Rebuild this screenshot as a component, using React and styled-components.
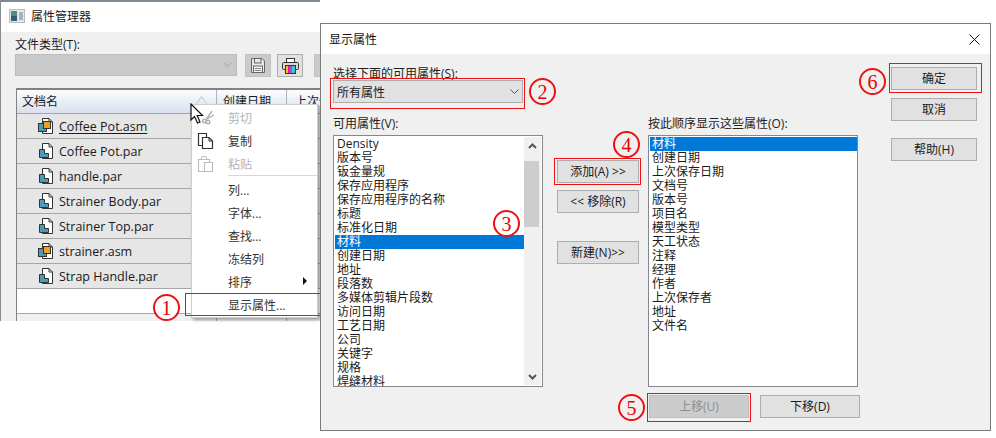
import React from 'react';
import styled, { createGlobalStyle } from 'styled-components';

const font = '"Open Sans", "Noto Sans CJK SC", sans-serif';

const GlobalStyle = createGlobalStyle`
html, body {
  margin: 0;
  padding: 0;
  background: #ffffff;
}
* {
  box-sizing: border-box;
}
`;

const Page = styled.div`
position: relative;
width: 996px;
height: 438px;
overflow: hidden;
background: #ffffff;
font-family: ${font};
font-size: 12px;
color: #1a1a1a;
`;

/* back window */
const BackWindow = styled.div`
position: absolute;
left: 0;
top: 0;
width: 320px;
height: 321px;
display: flex;
flex-direction: column;
border-top: 2px solid #7d8a94;
border-left: 1px solid #8c8c8c;
background: #f0f0f0;
overflow: hidden;
`;

const BackTitle = styled.div`
height: 30px;
flex-shrink: 0;
display: flex;
align-items: center;
gap: 6px;
padding: 0 0 2px 8px;
background: #ffffff;
font-size: 12px;
`;

const BackBody = styled.div`
flex: 1;
display: flex;
flex-direction: column;
padding: 5px 0 0 14px;
min-height: 0;
`;

const BackLabel = styled.div`
height: 16px;
line-height: 16px;
`;

const ToolRow = styled.div`
display: flex;
align-items: center;
height: 24px;
`;

const TypeSelect = styled.div`
width: 222px;
height: 22px;
flex-shrink: 0;
display: flex;
align-items: center;
justify-content: flex-end;
padding-right: 4px;
background: #c9c9c9;
border: 1px solid #bcbcbc;
`;

const ToolButton = styled.div`
width: 26px;
height: 23px;
flex-shrink: 0;
margin-left: ${p => p.$gap}px;
display: flex;
align-items: center;
justify-content: center;
background: ${p => (p.$disabled ? '#cacaca' : '#e1e1e1')};
border: 1px solid ${p => (p.$disabled ? '#c2c2c2' : '#adadad')};
`;

const DocList = styled.div`
margin: 11px 0 0 1px;
flex: 1;
width: 320px;
flex-shrink: 0;
border-left: 1px solid #828282;
border-top: 2px solid #828282;
overflow: hidden;
`;

const DocHeader = styled.div`
height: 24px;
display: grid;
grid-template-columns: 200px 70px 60px;
background: linear-gradient(#fbfcfe, #d9e1ee);
border-bottom: 1px solid #a6a6a6;
`;

const HeaderCell = styled.div`
position: relative;
display: flex;
align-items: center;
padding-left: ${p => p.$pad}px;
padding-bottom: 2px;
border-right: 1px solid #a9b4c4;
white-space: nowrap;
overflow: hidden;
`;

const SortMark = styled.svg`
position: absolute;
right: 9px;
top: 6px;
`;

const DocRow = styled.div`
height: 25px;
display: flex;
align-items: center;
gap: 5px;
padding-left: 20px;
background: ${p => (p.$empty ? '#ffffff' : '#e6e6e6')};
border-bottom: 1px solid #a6a6a6;
font-size: 12.5px;
`;

const DocName = styled.span`
text-decoration: ${p => (p.$link ? 'underline' : 'none')};
text-underline-offset: 2px;
`;

const DocFoot = styled.div`
height: 8px;
display: grid;
grid-template-columns: 200px 70px 60px;
`;

const FootCell = styled.div`
border-right: 1px solid #a6a6a6;
`;

/* context menu */
const Menu = styled.div`
position: absolute;
left: 191px;
top: 104px;
width: 127px;
height: 214px;
padding-top: 1px;
display: flex;
flex-direction: column;
background: #ffffff;
border: 1px solid #cfcfcf;
box-shadow: 2px 2px 3px rgba(0, 0, 0, 0.35);
`;

const MenuItem = styled.div`
position: relative;
height: 23px;
flex-shrink: 0;
display: flex;
align-items: center;
padding-left: 36px;
color: ${p => (p.$disabled ? '#b4b4b4' : '#333333')};
`;

const MenuIcon = styled.span`
position: absolute;
left: 5px;
top: 3px;
width: 18px;
height: 18px;
display: flex;
`;

const MenuSeparator = styled.div`
height: 1px;
flex-shrink: 0;
margin: 0 0 2px 36px;
background: #d7d7d7;
`;

const SubArrow = styled.span`
position: absolute;
right: 10px;
top: 7px;
border-left: 4px solid #111111;
border-top: 4px solid transparent;
border-bottom: 4px solid transparent;
`;

const Pointer = styled.svg`
position: absolute;
left: 190px;
top: 103px;
`;

/* dialog */
const Dialog = styled.div`
position: absolute;
left: 320px;
top: 23px;
width: 671px;
height: 408px;
display: flex;
flex-direction: column;
background: #f0f0f0;
border: 1px solid #7a7a7a;
`;

const DialogTitle = styled.div`
height: 30px;
flex-shrink: 0;
display: flex;
align-items: center;
justify-content: space-between;
padding: 0 10px 0 8px;
background: #ffffff;
color: #111111;
`;

const DialogBody = styled.div`
flex: 1;
display: grid;
grid-template-columns: 210px 82px 212px 86px;
column-gap: 14px;
padding-left: 12px;
`;

const Column = styled.div`
display: flex;
flex-direction: column;
align-items: flex-start;
padding-top: ${p => p.$top || 0}px;
margin-left: ${p => p.$left || 0}px;
`;

const FieldLabel = styled.div`
height: 14px;
line-height: 16px;
margin-top: ${p => p.$top}px;
white-space: nowrap;
color: #222222;
`;

const Select = styled.div`
width: 190px;
height: 23px;
display: flex;
align-items: center;
justify-content: space-between;
padding: 0 3px 0 3px;
background: #e1e1e1;
border: 1px solid #adadad;
`;

const ListBox = styled.div`
width: 210px;
height: 252px;
margin-top: ${p => p.$top}px;
display: flex;
background: #ffffff;
border: 1px solid #828790;
overflow: hidden;
`;

const Options = styled.div`
flex: 1;
padding: 1px 0 0 1px;
overflow: hidden;
min-width: 0;
`;

const Option = styled.div`
height: 14px;
line-height: 14px;
padding-left: 2px;
white-space: nowrap;
background: ${p => (p.$selected ? '#0078d7' : 'transparent')};
color: ${p => (p.$selected ? '#ffffff' : '#1a1a1a')};
`;

const ScrollBar = styled.div`
width: 17px;
flex-shrink: 0;
margin: 1px 1px 1px 0;
display: flex;
flex-direction: column;
align-items: center;
background: #f0f0f0;
`;

const ScrollArrow = styled.div`
height: 17px;
flex-shrink: 0;
display: flex;
align-items: center;
justify-content: center;
`;

const ScrollTrack = styled.div`
flex: 1;
width: 100%;
padding-top: 7px;
`;

const ScrollThumb = styled.div`
width: 15px;
height: 66px;
background: #cdcdcd;
`;

const Button = styled.div`
width: ${p => p.$width}px;
height: 23px;
flex-shrink: 0;
margin-top: ${p => p.$top || 0}px;
margin-left: ${p => p.$left || 0}px;
padding-bottom: 2px;
display: flex;
align-items: center;
justify-content: center;
background: ${p => (p.$disabled ? '#cccccc' : '#e1e1e1')};
border: 1px solid ${p => (p.$disabled ? '#bfbfbf' : '#adadad')};
color: ${p => (p.$disabled ? '#8f8f8f' : '#1a1a1a')};
white-space: nowrap;
`;

const MoveRow = styled.div`
display: flex;
`;

/* annotations */
const RedBox = styled.div`
position: absolute;
left: ${p => p.$x}px;
top: ${p => p.$y}px;
width: ${p => p.$w}px;
height: ${p => p.$h}px;
border: 1px solid #ee1111;
pointer-events: none;
`;

const Callout = styled.div`
position: absolute;
left: ${p => p.$x - 13}px;
top: ${p => p.$y - 13}px;
width: 27px;
height: 27px;
display: flex;
align-items: center;
justify-content: center;
border: 2px solid #ee1111;
border-radius: 50%;
background: ${p => (p.$fill ? '#ffffff' : 'transparent')};
color: #ee0000;
font-family: "Liberation Serif", serif;
font-size: 20px;
line-height: 1;
`;

const AppIcon = () => (
  <svg width="16" height="14" viewBox="0 0 16 14">
    <rect x="0.5" y="0.5" width="15" height="13" fill="#e4e7e6" stroke="#b9bcbc" />
    <rect x="2" y="2" width="6" height="10" fill="#4d8a86" />
    <rect x="2" y="7" width="6" height="5" fill="#2f5f7a" />
    <rect x="10" y="3" width="4" height="8" fill="#aab4b4" />
  </svg>
);

const Chevron = ({ color = '#555555' }) => (
  <svg width="9" height="6" viewBox="0 0 9 6">
    <path d="M0.5 0.5 L4.5 4.5 L8.5 0.5" fill="none" stroke={color} strokeWidth="1" />
  </svg>
);

const ScrollChevron = ({ up }) => (
  <svg width="9" height="6" viewBox="0 0 9 6">
    <path d={up ? 'M1 5 L4.5 1.5 L8 5' : 'M1 1 L4.5 4.5 L8 1'} fill="none" stroke="#555555" strokeWidth="2" />
  </svg>
);

const SaveIcon = () => (
  <svg width="16" height="17" viewBox="0 0 16 17">
    <path d="M1.5 1.5 H12 L14.5 4 V15.5 H1.5 Z" fill="#e8e8e8" stroke="#666666" />
    <rect x="4.5" y="1.5" width="6.5" height="4.5" fill="none" stroke="#666666" />
    <rect x="3.5" y="9" width="9" height="6.5" fill="#f5f5f5" stroke="#666666" />
    <path d="M5 11.5 H11 M5 13.5 H11" stroke="#888888" />
  </svg>
);

const PrintIcon = () => (
  <svg width="17" height="17" viewBox="0 0 17 17">
    <rect x="4.5" y="1.5" width="8" height="4" fill="#ffffff" stroke="#333333" />
    <rect x="0.5" y="5.5" width="16" height="7" rx="1" fill="#d8d8d8" stroke="#333333" />
    <rect x="4" y="9" width="2" height="7" fill="#f0c020" />
    <rect x="6" y="9" width="2" height="7" fill="#e02090" />
    <rect x="8" y="9" width="2" height="7" fill="#b050d0" />
    <rect x="10" y="9" width="3" height="7" fill="#40c0d0" />
    <rect x="3.5" y="8.5" width="10" height="8" fill="none" stroke="#333333" />
  </svg>
);

const FileIcon = ({ assembly }) => (
  <svg width="17" height="18" viewBox="0 0 17 18">
    <path d="M5.5 1.5 H12 L15.5 5 V16.5 H5.5 Z" fill="#ffffff" stroke="#333333" />
    <path d="M12 1.5 V5 H15.5" fill="none" stroke="#333333" />
    {assembly ? (
      <>
        <rect x="1.5" y="6.5" width="8" height="8" fill="#4f9bb5" stroke="#333333" />
        <rect x="6.5" y="4.5" width="7" height="7" fill="#f0a020" stroke="#333333" />
      </>
    ) : (
      <path d="M2.5 7.5 H7.5 V11.5 H11.5 V15.5 H2.5 Z" fill="#4f9bb5" stroke="#333333" />
    )}
  </svg>
);

const ScissorsIcon = () => (
  <svg width="18" height="16" viewBox="0 0 18 16">
    <path d="M15 2 L9.5 10 M17 6 L8 11" fill="none" stroke="#b0b0b0" strokeWidth="1.4" />
    <circle cx="7.5" cy="12" r="1.8" fill="none" stroke="#b0b0b0" strokeWidth="1.4" />
    <circle cx="11" cy="13" r="1.8" fill="none" stroke="#b0b0b0" strokeWidth="1.4" />
  </svg>
);

const CopyIcon = () => (
  <svg width="17" height="18" viewBox="0 0 17 18">
    <path d="M1.5 1.5 H9.5 V13.5 H1.5 Z" fill="#ffffff" stroke="#333333" strokeWidth="1.2" />
    <path d="M5.5 5.5 H12 L15.5 9 V16.5 H5.5 Z" fill="#ffffff" stroke="#333333" strokeWidth="1.2" />
    <path d="M12 5.5 V9 H15.5" fill="none" stroke="#333333" />
  </svg>
);

const PasteIcon = () => (
  <svg width="17" height="18" viewBox="0 0 17 18">
    <path d="M1.5 4.5 H12.5 V16.5 H1.5 Z" fill="#ffffff" stroke="#bdbdbd" strokeWidth="1.2" />
    <path d="M4 4.5 L5 1.5 H9 L10 4.5" fill="none" stroke="#bdbdbd" />
    <path d="M7.5 7.5 H15.5 V16.5 H7.5 Z" fill="#ffffff" stroke="#bdbdbd" strokeWidth="1.2" />
  </svg>
);

const docs = [
  { name: 'Coffee Pot.asm', assembly: true, link: true },
  { name: 'Coffee Pot.par' },
  { name: 'handle.par' },
  { name: 'Strainer Body.par' },
  { name: 'Strainer Top.par' },
  { name: 'strainer.asm', assembly: true },
  { name: 'Strap Handle.par' },
];

const available = [
  'Density', '版本号', '钣金量规', '保存应用程序', '保存应用程序的名称', '标题', '标准化日期', '材料',
  '创建日期', '地址', '段落数', '多媒体剪辑片段数', '访问日期', '工艺日期', '公司', '关键字', '规格', '焊缝材料',
];

const chosen = [
  '材料', '创建日期', '上次保存日期', '文档号', '版本号', '项目名', '模型类型', '天工状态', '注释',
  '经理', '作者', '上次保存者', '地址', '文件名',
];

const redBoxes = [
  { x: 330, y: 78, w: 195, h: 31 },
  { x: 554, y: 158, w: 87, h: 27 },
  { x: 647, y: 393, w: 104, h: 29 },
  { x: 889, y: 63, w: 93, h: 30 },
];

const callouts = [
  { n: 1, x: 166, y: 307, fill: true },
  { n: 2, x: 542, y: 91 },
  { n: 3, x: 506, y: 223 },
  { n: 4, x: 626, y: 144 },
  { n: 5, x: 631, y: 407 },
  { n: 6, x: 872, y: 81 },
];

class App extends React.Component {
  render() {
    return (
      <Page>
        <GlobalStyle />
        <BackWindow>
          <BackTitle>
            <AppIcon />
            属性管理器
          </BackTitle>
          <BackBody>
            <BackLabel>文件类型(T):</BackLabel>
            <ToolRow>
              <TypeSelect><Chevron color="#a0a0a0" /></TypeSelect>
              <ToolButton $gap={8} $disabled><SaveIcon /></ToolButton>
              <ToolButton $gap={6}><PrintIcon /></ToolButton>
              <ToolButton $gap={11} $disabled />
            </ToolRow>
            <DocList>
              <DocHeader>
                <HeaderCell $pad={5}>
                  文档名
                  <SortMark width="11" height="8" viewBox="0 0 11 8">
                    <path d="M0.5 7.5 L5.5 0.5 L10.5 7.5" fill="none" stroke="#b9c4d4" />
                  </SortMark>
                </HeaderCell>
                <HeaderCell $pad={6}>创建日期</HeaderCell>
                <HeaderCell $pad={8}>上次保存</HeaderCell>
              </DocHeader>
              {docs.map(d => (
                <DocRow key={d.name}>
                  <FileIcon assembly={d.assembly} />
                  <DocName $link={d.link}>{d.name}</DocName>
                </DocRow>
              ))}
              <DocRow $empty />
              <DocFoot>
                <FootCell />
                <FootCell />
              </DocFoot>
            </DocList>
          </BackBody>
        </BackWindow>

        <Menu>
          <MenuItem $disabled><MenuIcon><ScissorsIcon /></MenuIcon>剪切</MenuItem>
          <MenuItem><MenuIcon><CopyIcon /></MenuIcon>复制</MenuItem>
          <MenuItem $disabled><MenuIcon><PasteIcon /></MenuIcon>粘贴</MenuItem>
          <MenuSeparator />
          <MenuItem>列...</MenuItem>
          <MenuItem>字体...</MenuItem>
          <MenuItem>查找...</MenuItem>
          <MenuItem>冻结列</MenuItem>
          <MenuItem>排序<SubArrow /></MenuItem>
          <MenuItem>显示属性...</MenuItem>
        </Menu>
        <Pointer width="14" height="22" viewBox="0 0 14 22">
          <path d="M1 1 V17 L4.5 13.5 L7.5 20 L10 19 L7.2 12.5 L12.5 12.5 Z" fill="#ffffff" stroke="#111111" strokeWidth="1.2" />
        </Pointer>
        <RedBox $x={185} $y={293} $w={136} $h={23} />

        <Dialog>
          <DialogTitle>
            显示属性
            <svg width="11" height="11" viewBox="0 0 11 11">
              <path d="M0.5 0.5 L10.5 10.5 M10.5 0.5 L0.5 10.5" stroke="#111111" strokeWidth="1" />
            </svg>
          </DialogTitle>
          <DialogBody>
            <Column $top={12}>
              <FieldLabel>选择下面的可用属性(S):</FieldLabel>
              <Select>所有属性<Chevron /></Select>
              <FieldLabel $top={13}>可用属性(V):</FieldLabel>
              <ListBox $top={5}>
                <Options>
                  {available.map(o => <Option key={o} $selected={o === '材料'}>{o}</Option>)}
                </Options>
                <ScrollBar>
                  <ScrollArrow><ScrollChevron up /></ScrollArrow>
                  <ScrollTrack><ScrollThumb /></ScrollTrack>
                  <ScrollArrow><ScrollChevron /></ScrollArrow>
                </ScrollBar>
              </ListBox>
            </Column>
            <Column $top={106}>
              <Button $width={82}>添加(A) &gt;&gt;</Button>
              <Button $width={82} $top={7}>&lt;&lt; 移除(R)</Button>
              <Button $width={82} $top={28}>新建(N)&gt;&gt;</Button>
            </Column>
            <Column $left={-5} $top={62}>
              <FieldLabel>按此顺序显示这些属性(O):</FieldLabel>
              <ListBox $top={5}>
                <Options>
                  {chosen.map(o => <Option key={o} $selected={o === '材料'}>{o}</Option>)}
                </Options>
              </ListBox>
              <MoveRow>
                <Button $width={100} $top={8} $left={1} $disabled>上移(U)</Button>
                <Button $width={100} $top={8} $left={11}>下移(D)</Button>
              </MoveRow>
            </Column>
            <Column $left={12} $top={13}>
              <Button $width={86}>确定</Button>
              <Button $width={86} $top={8}>取消</Button>
              <Button $width={86} $top={17}>帮助(H)</Button>
            </Column>
          </DialogBody>
        </Dialog>

        {redBoxes.map(b => <RedBox key={b.x} $x={b.x} $y={b.y} $w={b.w} $h={b.h} />)}
        {callouts.map(c => <Callout key={c.n} $x={c.x} $y={c.y} $fill={c.fill}>{c.n}</Callout>)}
      </Page>
    );
  }
}

export default App;
